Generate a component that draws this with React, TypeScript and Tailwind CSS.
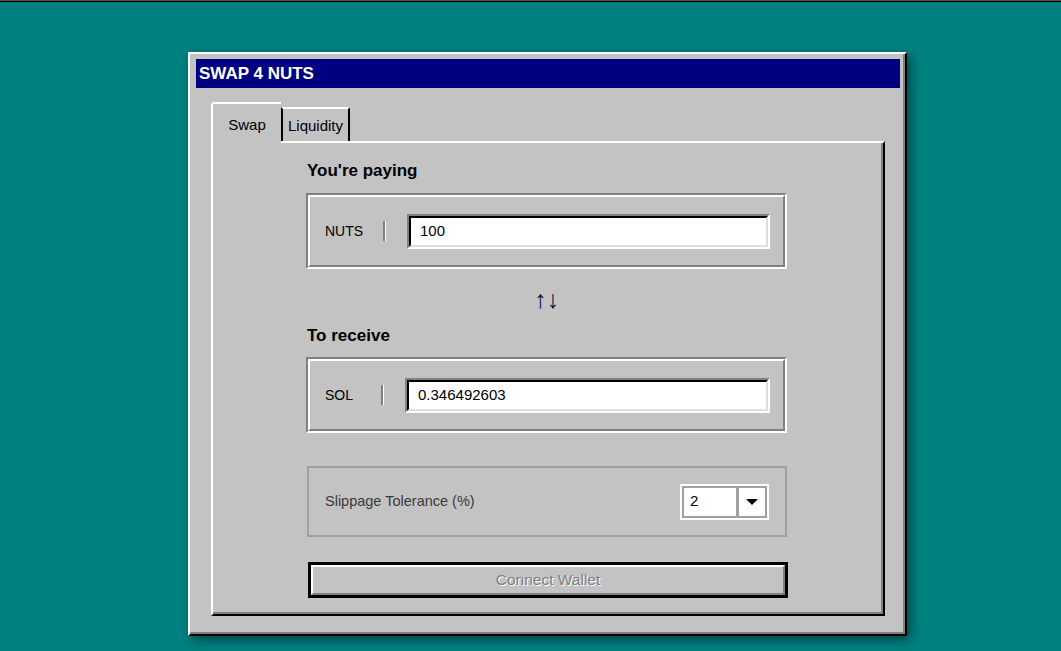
import React from "react";

function Groove({ children }: { children: React.ReactNode }) {
  return (
    <div className="border-2 border-t-[#808080] border-l-[#808080] border-r-white border-b-white">
      <div className="h-[72px] border-2 border-t-white border-l-white border-r-[#808080] border-b-[#808080] flex items-center pl-[15px] pr-[13px]">
        {children}
      </div>
    </div>
  );
}

function Field({ label, labelW, value }: { label: string; labelW: string; value: string }) {
  return (
    <Groove>
      <div className={`${labelW} text-[14px] text-black leading-[20px]`}>{label}</div>
      <div className="w-[3px] h-[20px] border-l-2 border-l-[#808080] border-r border-r-white" />
      <div className="ml-[21px] flex-1 h-[35px] border-2 border-t-[#808080] border-l-[#808080] border-r-white border-b-white">
        <div className="h-full border-2 border-t-black border-l-black border-r-[#dfdfdf] border-b-[#dfdfdf] bg-white pl-[9px] flex items-center text-[15px] text-black">
          {value}
        </div>
      </div>
    </Groove>
  );
}

export default function App() {
  return (
    <div
      className="w-full h-[651px] bg-[#008080] flex flex-col overflow-hidden"
      style={{ fontFamily: '"Liberation Sans", Arial, sans-serif' }}
    >
      <div className="h-[1px] bg-[#555555]" />
      <div className="h-[1px] bg-black" />
      <div className="ml-[188px] mt-[50px] w-[719px] h-[584px] bg-[#c3c3c3] border-2 border-t-white border-l-white border-r-black border-b-black shadow-[inset_-2px_-2px_0_#808080,4px_4px_10px_rgba(0,0,0,0.45)] pt-[5px] pl-[6px] pr-[5px] flex flex-col">
        <div className="h-[29px] bg-[#000080] text-white font-bold text-[17px] pl-[3px] flex items-center">
          SWAP 4 NUTS
        </div>
        <div className="mt-[14px] mx-[15px] flex flex-col">
          <div className="h-[39px] flex items-end">
            <div className="relative z-10 -mb-[2px] w-[70px] h-[41px] bg-[#c3c3c3] border-t-2 border-l-2 border-white rounded-tl-[3px] flex justify-center pt-[10px] text-[15px] text-black">
              Swap
            </div>
            <div className="w-[69px] h-[34px] border-t-2 border-t-white border-l-2 border-l-black border-r-2 border-r-black rounded-tr-[2px] flex justify-center pt-[6px] text-[15px] text-black">
              Liquidity
            </div>
          </div>
          <div className="h-[475px] border-2 border-t-white border-l-white border-r-black border-b-black shadow-[inset_-2px_-2px_0_#808080] pl-[93px] pt-[18px]">
            <div className="w-[481px] flex flex-col">
              <div className="text-[17px] font-bold leading-[20px] text-black pl-[1px]">You're paying</div>
              <div className="mt-[12px]">
                <Field label="NUTS" labelW="w-[58px]" value="100" />
              </div>
              <div className="h-[57px] flex items-center justify-center pt-[3px] text-[25px] leading-[24px] text-[#10104a]">
                ↑↓
              </div>
              <div className="text-[17px] font-bold leading-[20px] text-black pl-[1px]">To receive</div>
              <div className="mt-[11px]">
                <Field label="SOL" labelW="w-[56px]" value="0.346492603" />
              </div>
              <div className="mt-[33px] ml-[1px] h-[71px] border-2 border-[#a0a0a0] flex items-center justify-between pl-[16px] pr-[16px]">
                <div className="text-[14.5px] text-[#3a3a3a]">Slippage Tolerance (%)</div>
                <div className="w-[89px] h-[36px] border-2 border-white">
                  <div className="h-full border-2 border-[#a0a0a0] flex">
                    <div className="w-[52px] bg-white pl-[6px] flex items-center text-[15px] text-black">2</div>
                    <div className="w-[3px] bg-[#a0a0a0]" />
                    <div className="flex-1 bg-white flex items-center justify-center">
                      <div className="w-0 h-0 border-l-[6px] border-r-[6px] border-t-[6px] border-l-transparent border-r-transparent border-t-black" />
                    </div>
                  </div>
                </div>
              </div>
              <div className="mt-[25px] ml-[2px] w-[480px] h-[36px] border-[3px] border-black">
                <div className="h-full border-2 border-t-white border-l-white border-r-[#808080] border-b-[#808080] flex items-center justify-center text-[15.5px] text-[#808080] [text-shadow:1px_1px_0_#ffffff]">
                  Connect Wallet
                </div>
              </div>
            </div>
          </div>
        </div>
      </div>
    </div>
  );
}
